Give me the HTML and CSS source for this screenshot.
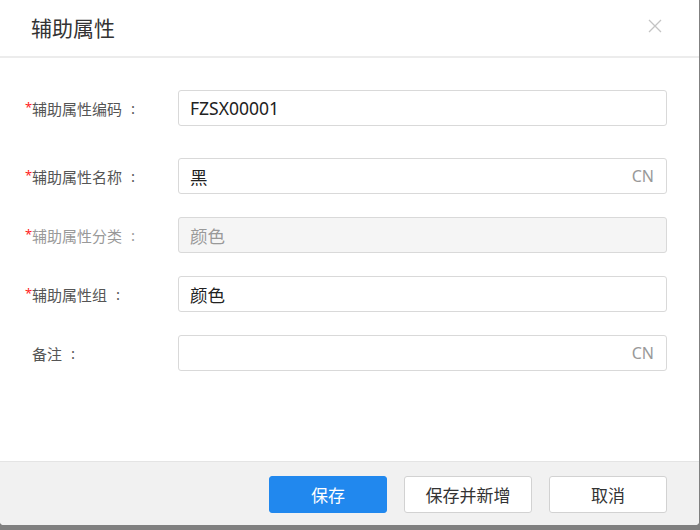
FILE: index.html
```html
<!DOCTYPE html>
<html lang="zh-CN">
<head>
<meta charset="utf-8">
<title>辅助属性</title>
<link rel="stylesheet" href="styles.css">
</head>
<body>
<div class="dialog">
  <div class="dialog-header">
    <span class="dialog-title">辅助属性</span>
    <svg class="close" width="14" height="14" viewBox="0 0 14 14"><path d="M1 1L13 13M13 1L1 13" stroke="#c4c4c4" stroke-width="1.3" fill="none"/></svg>
  </div>
  <div class="dialog-body">
    <div class="row row-first">
      <label class="label"><span class="req">*</span>辅助属性编码<span class="colon">:</span></label>
      <div class="input"><span class="value">FZSX00001</span></div>
    </div>
    <div class="row">
      <label class="label"><span class="req">*</span>辅助属性名称<span class="colon">:</span></label>
      <div class="input"><span class="value">黑</span><span class="suffix">CN</span></div>
    </div>
    <div class="row">
      <label class="label label-muted"><span class="req">*</span>辅助属性分类<span class="colon">:</span></label>
      <div class="input input-disabled"><span class="value">颜色</span></div>
    </div>
    <div class="row">
      <label class="label"><span class="req">*</span>辅助属性组<span class="colon">:</span></label>
      <div class="input"><span class="value">颜色</span></div>
    </div>
    <div class="row">
      <label class="label"><span class="req req-hidden">*</span>备注<span class="colon">:</span></label>
      <div class="input"><span class="value"></span><span class="suffix">CN</span></div>
    </div>
  </div>
  <div class="dialog-footer">
    <button class="btn btn-primary">保存</button>
    <button class="btn btn-wide">保存并新增</button>
    <button class="btn">取消</button>
  </div>
</div>
</body>
</html>
```

FILE: styles.css
```css
html, body {
  margin: 0;
  padding: 0;
}
body {
  background: #808080;
  font-family: "Noto Sans", "Noto Sans CJK SC", sans-serif;
  width: 700px;
  height: 530px;
  overflow: hidden;
}
.dialog {
  width: 699px;
  height: 525px;
  background: #fff;
  border-radius: 0 0 4px 4px;
  display: flex;
  flex-direction: column;
  overflow: hidden;
}
.dialog-header {
  height: 56px;
  flex: none;
  display: flex;
  align-items: center;
  justify-content: space-between;
  padding: 0 37px 0 31px;
  border-bottom: 2px solid #ececec;
}
.dialog-title {
  font-size: 21px;
  color: #333;
  margin-top: -2px;
}
.close {
  margin-top: -4px;
}
.dialog-body {
  flex: 1;
  padding: 32px 32px 0 25px;
}
.row {
  display: flex;
  align-items: center;
  height: 36px;
  margin-bottom: 23px;
}
.row-first {
  margin-bottom: 32px;
}
.label {
  width: 153px;
  flex: none;
  font-size: 15px;
  color: #555;
  display: flex;
  align-items: center;
}
.label-muted {
  color: #999;
}
.colon {
  margin-left: 9px;
}
.req {
  color: #f22;
  font-size: 13px;
  width: 7px;
  margin-top: -3px;
}
.req-hidden {
  visibility: hidden;
}
.input {
  flex: 1;
  height: 36px;
  box-sizing: border-box;
  border: 1px solid #d9d9d9;
  border-radius: 3px;
  display: flex;
  align-items: center;
  justify-content: space-between;
  padding: 0 12px 0 11px;
  font-size: 17.5px;
  color: #222;
}
.input-disabled {
  background: #f5f5f5;
  color: #999;
}
.suffix {
  color: #999;
  font-size: 16px;
}
.dialog-footer {
  height: 64px;
  flex: none;
  box-sizing: border-box;
  background: #f1f1f1;
  border-top: 1px solid #e4e4e4;
  display: flex;
  align-items: center;
  justify-content: flex-end;
  gap: 17px;
  padding: 0 32px 0 0;
}
.btn {
  width: 118px;
  height: 37px;
  box-sizing: border-box;
  border: 1px solid #d2d2d2;
  border-radius: 3px;
  background: #fff;
  color: #333;
  font-family: "Noto Sans", "Noto Sans CJK SC", sans-serif;
  font-size: 17px;
  padding: 0;
  margin-top: 1px;
}
.btn-wide {
  width: 128px;
}
.btn-primary {
  background: #2188ee;
  border-color: #2188ee;
  color: #fff;
}
```
